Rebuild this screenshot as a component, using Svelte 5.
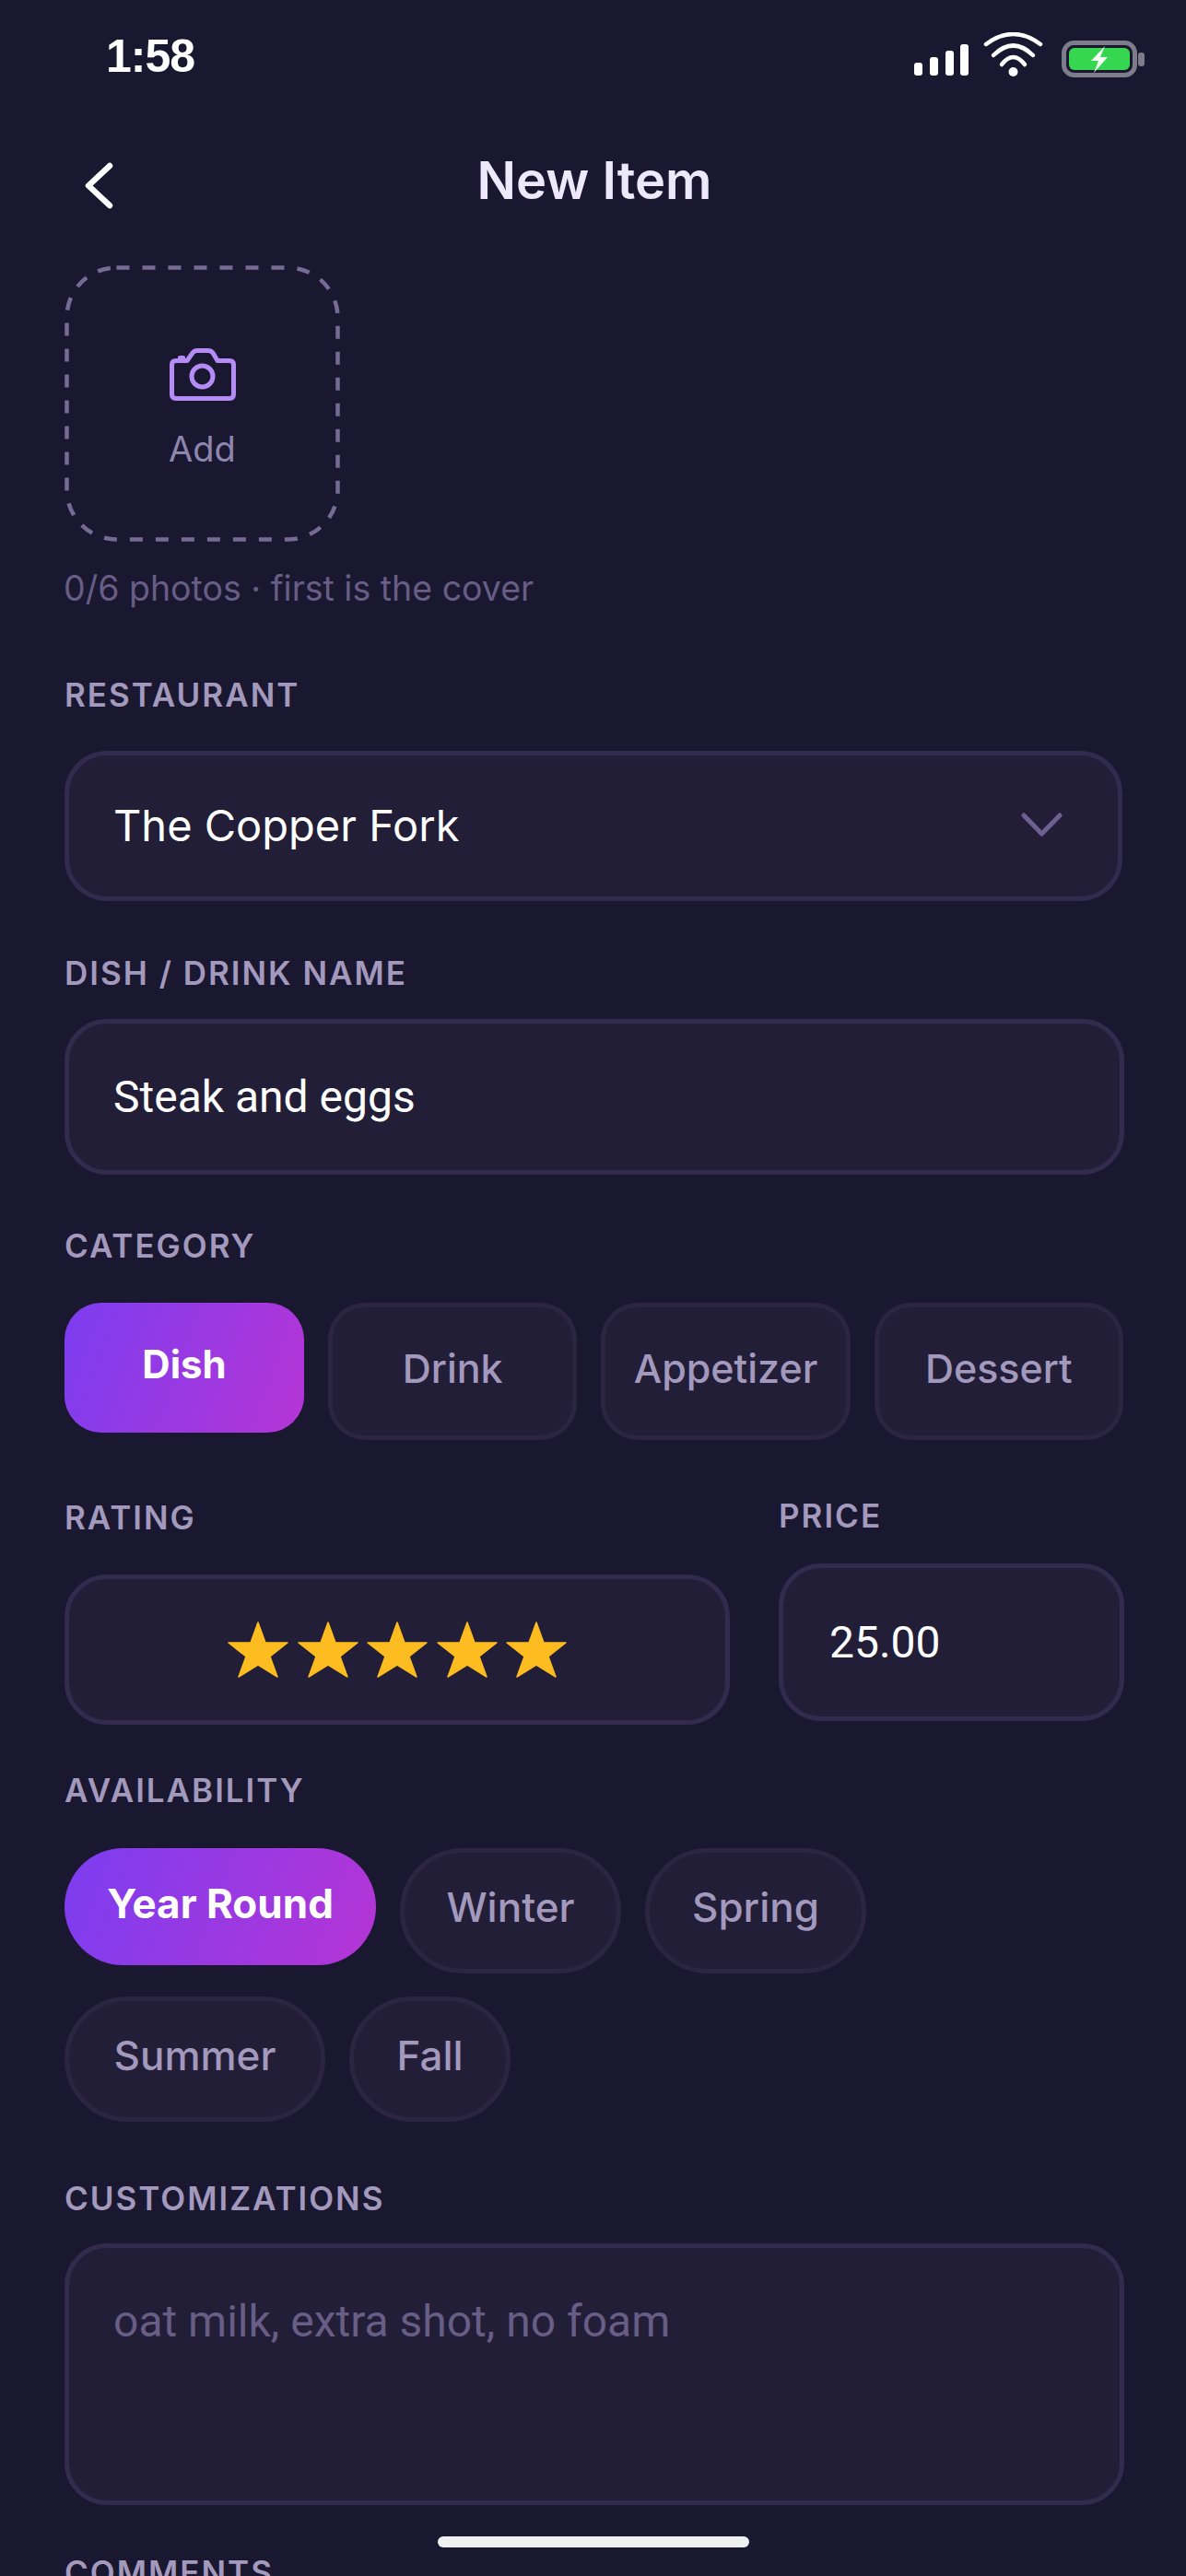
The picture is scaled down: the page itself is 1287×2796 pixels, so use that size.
<script>
let categories = ['Dish', 'Drink', 'Appetizer', 'Dessert'];
let seasons = ['Year Round', 'Winter', 'Spring', 'Summer', 'Fall'];
let category = 'Dish';
let season = 'Year Round';
let rating = [1, 2, 3, 4, 5];
</script>

<div class="screen">
    <div class="status">
        <span class="time">1:58</span>
        <div class="statusIcons">
            <svg class="signal" width="59" height="34" viewBox="0 0 59 34" fill="#fff">
                <rect x="0" y="20" width="9" height="14" rx="3"/>
                <rect x="17" y="14" width="9" height="20" rx="3"/>
                <rect x="34" y="7" width="9" height="27" rx="3"/>
                <rect x="50" y="0" width="9" height="34" rx="3"/>
            </svg>
            <svg class="wifi" width="65" height="48" viewBox="0 0 65 48" fill="none" stroke="#fff" stroke-width="4.5" stroke-linecap="round">
                <path d="M3 13 Q32.5 -9 62 13"/>
                <path d="M11 25 Q32.5 4 54 25"/>
                <path d="M20 35 Q32.5 19 45 35"/>
                <circle cx="32.5" cy="43" r="5" fill="#fff" stroke="none"/>
            </svg>
            <svg class="battery" width="90" height="40" viewBox="0 0 90 40">
                <rect x="2.5" y="2.5" width="77" height="35" rx="11" fill="none" stroke="#7e7b8b" stroke-width="5"/>
                <rect x="8" y="8" width="66" height="24" rx="6" fill="#34d74f"/>
                <path d="M47 6 L32 22 H40 L35 35 L50 18 H42 Z" fill="#f2fff2"/>
                <rect x="83" y="13" width="7" height="15" rx="3" fill="#7e7b8b"/>
            </svg>
        </div>
    </div>

    <div class="nav">
        <svg class="back" width="32" height="51" viewBox="0 0 32 51" fill="none" stroke="#fff" stroke-width="6.5" stroke-linecap="round" stroke-linejoin="round">
            <path d="M28 4 L5 25.5 L28 47"/>
        </svg>
        <h1>New Item</h1>
    </div>

    <button class="addPhoto">
        <svg class="dashes" width="299" height="300" viewBox="0 0 299 300" fill="none" stroke="#756b94" stroke-width="4.5" stroke-dasharray="14 14">
            <rect x="2.5" y="2.5" width="294" height="295" rx="54"/>
        </svg>
        <svg width="72" height="57" viewBox="0 0 72 57" fill="none" stroke="#b58cf5" stroke-width="5" stroke-linejoin="round">
            <path d="M7 13.5 H19 L25 5 Q27 2.5 30 2.5 H42 Q45 2.5 47 5 L52 13.5 H65 Q69.5 13.5 69.5 18 V50 Q69.5 54.5 65 54.5 H7 Q2.5 54.5 2.5 50 V18 Q2.5 13.5 7 13.5 Z"/>
            <circle cx="35.5" cy="30.5" r="11.5"/>
            <rect x="9" y="8" width="8" height="5" rx="2" fill="#b58cf5" stroke="none"/>
        </svg>
        <span>Add</span>
    </button>
    <p class="hint">0/6 photos · first is the cover</p>

    <div class="label restaurantLabel">RESTAURANT</div>
    <div class="field select">
        <span>The Copper Fork</span>
        <svg width="45" height="27" viewBox="0 0 45 27" fill="none" stroke="#6b6190" stroke-width="5" stroke-linecap="round" stroke-linejoin="round">
            <path d="M3 3 L22.5 23 L42 3"/>
        </svg>
    </div>

    <div class="label dishLabel">DISH / DRINK NAME</div>
    <div class="field input roboto">Steak and eggs</div>

    <div class="label categoryLabel">CATEGORY</div>
    <div class="categories">
        {#each categories as c}
            <button class="chip" class:active={c === category} on:click={() => (category = c)}>{c}</button>
        {/each}
    </div>

    <div class="ratingRow">
        <div class="ratingCol">
            <div class="label">RATING</div>
            <div class="field stars">
                {#each rating as r}
                    <svg width="66" height="61" viewBox="0 0 66 61" fill="#fdbc1f" stroke="#fdbc1f" stroke-width="1.5" stroke-linejoin="round">
                        <path d="M33 1 L41 23 L65 23 L46 38 L54 60 L33 47 L12 60 L20 38 L1 23 L25 23 Z"/>
                    </svg>
                {/each}
            </div>
        </div>
        <div class="priceCol">
            <div class="label">PRICE</div>
            <div class="field price roboto">25.00</div>
        </div>
    </div>

    <div class="label availLabel">AVAILABILITY</div>
    <div class="seasons">
        {#each seasons as s}
            <button class="pill" class:active={s === season} on:click={() => (season = s)}>{s}</button>
        {/each}
    </div>

    <div class="label customLabel">CUSTOMIZATIONS</div>
    <div class="field textarea roboto">oat milk, extra shot, no foam</div>

    <div class="label commentsLabel">COMMENTS</div>

    <div class="homeBar"></div>
</div>

<style>
    :global(body) {
        margin: 0;
        background: #1a1730;
    }

    .screen {
        position: relative;
        height: 2796px;
        overflow: hidden;
        padding: 0 67px 0 70px;
        box-sizing: border-box;
        background: #1a1730;
        font-family: Inter, sans-serif;
    }

    .status {
        display: flex;
        justify-content: space-between;
        height: 90px;
        margin: 0 -22px 0 45px;
    }

    .time {
        margin-top: 36px;
        font-size: 50px;
        line-height: 50px;
        font-weight: 700;
        letter-spacing: -1px;
        font-family: "Liberation Sans", sans-serif;
        color: #fff;
    }

    .statusIcons {
        display: flex;
        align-items: flex-start;
    }

    .signal {
        margin-top: 48px;
    }

    .wifi {
        margin: 35px 0 0 16px;
    }

    .battery {
        margin: 44px 0 0 20px;
    }

    .nav {
        position: relative;
        display: flex;
        justify-content: center;
        height: 198px;
    }

    .back {
        position: absolute;
        left: 21px;
        top: 86px;
    }

    h1 {
        margin: 78px 0 0;
        font-size: 56px;
        line-height: 56px;
        font-weight: 600;
        color: #ede9fb;
    }

    .addPhoto {
        position: relative;
        display: flex;
        flex-direction: column;
        align-items: center;
        width: 299px;
        height: 300px;
        padding: 90px 0 0;
        box-sizing: border-box;
        background: none;
        border: none;
        font-family: inherit;
    }

    .dashes {
        position: absolute;
        left: 0;
        top: 0;
    }

    .addPhoto span {
        margin-top: 30px;
        font-size: 38px;
        line-height: 44px;
        color: #8f86ad;
    }

    .hint {
        margin: 29px 0 0 -1px;
        font-size: 37.5px;
        line-height: 44px;
        color: #675d85;
    }

    .label {
        height: 40px;
        font-size: 35px;
        line-height: 37px;
        font-weight: 600;
        letter-spacing: 2px;
        color: #a299bd;
    }

    .restaurantLabel {
        margin-top: 75px;
    }

    .dishLabel {
        margin-top: 60px;
    }

    .categoryLabel {
        margin-top: 59px;
    }

    .availLabel {
        margin-top: 53px;
    }

    .customLabel {
        margin-top: 65px;
    }

    .commentsLabel {
        margin-top: 55px;
    }

    .field {
        box-sizing: border-box;
        background: #231e38;
        border: 5px solid #322b4d;
        border-radius: 46px;
        color: #fff;
    }

    .roboto {
        font-family: Roboto, sans-serif;
        font-size: 48px;
    }

    .select {
        display: flex;
        align-items: center;
        justify-content: space-between;
        height: 163px;
        margin: 39px 2px 0 0;
        padding: 0 60px 2px 48px;
        font-size: 47px;
    }

    .input {
        display: flex;
        align-items: center;
        height: 169px;
        margin-top: 28px;
        padding-left: 48px;
    }

    .categories {
        display: flex;
        align-items: flex-start;
        gap: 26px;
        margin: 40px 1px 0 0;
    }

    .chip {
        flex: 1;
        height: 149px;
        padding: 0 0 8px;
        box-sizing: border-box;
        background: #231e38;
        border: 5px solid #2b2542;
        border-radius: 40px;
        font-family: inherit;
        font-size: 43px;
        font-weight: 500;
        color: #a299bd;
    }

    .chip.active {
        flex: 0 0 260px;
        height: 141px;
        border: none;
        font-weight: 700;
        font-size: 42px;
        color: #fff;
        background: linear-gradient(110deg, #7c3df0, #b535d5);
    }

    .ratingRow {
        display: flex;
        gap: 53px;
        margin-top: 64px;
    }

    .ratingCol {
        flex: 0 0 722px;
        padding-top: 2px;
    }

    .priceCol {
        flex: 1;
    }

    .stars {
        display: flex;
        align-items: center;
        justify-content: center;
        gap: 9.5px;
        height: 163px;
        margin-top: 40px;
    }

    .price {
        display: flex;
        align-items: center;
        height: 171px;
        margin-top: 30px;
        padding-left: 50px;
    }

    .seasons {
        display: flex;
        flex-wrap: wrap;
        align-items: flex-start;
        gap: 25px 26px;
        margin-top: 41px;
    }

    .pill {
        width: 240px;
        height: 136px;
        padding: 0 0 8px;
        box-sizing: border-box;
        background: #231e38;
        border: 5px solid #2b2542;
        border-radius: 70px;
        font-family: inherit;
        font-size: 44px;
        font-weight: 500;
        color: #a299bd;
    }

    .pill:nth-child(4) {
        width: 283px;
    }

    .pill:nth-child(5) {
        width: 175px;
    }

    .pill.active {
        width: 338px;
        height: 127px;
        border: none;
        font-weight: 700;
        color: #fff;
        background: linear-gradient(110deg, #7c3df0, #b535d5);
    }

    .textarea {
        height: 284px;
        margin-top: 27px;
        padding: 52px 48px 0;
        line-height: 56px;
        color: #675d85;
    }

    .homeBar {
        position: absolute;
        left: 475px;
        top: 2753px;
        width: 338px;
        height: 12px;
        border-radius: 6px;
        background: #f0f0f0;
    }
</style>
